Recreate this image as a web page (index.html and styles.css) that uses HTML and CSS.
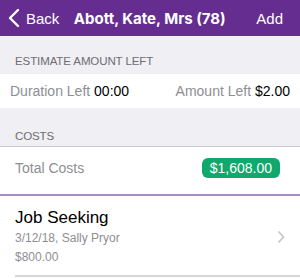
FILE: index.html
```html
<!DOCTYPE html>
<html lang="en">
<head>
    <meta charset="UTF-8">
    <meta name="viewport" content="width=device-width, initial-scale=1.0">
    <title>Abott, Kate, Mrs (78)</title>
    <link rel="stylesheet" href="styles.css">
</head>
<body>
    <div class="nav">
        <a class="nav-back">
            <svg class="back-icon" width="12" height="20" viewBox="0 0 12 20">
                <path d="M10 2 L2 10 L10 18" fill="none" stroke="#fff" stroke-width="2.4" stroke-linecap="round" stroke-linejoin="round"/>
            </svg>
            Back
        </a>
        <div class="nav-title">Abott, Kate, Mrs (78)</div>
        <a class="nav-add">Add</a>
    </div>

    <div class="section-head">Estimate Amount Left</div>
    <div class="row estimate">
        <span><span class="label">Duration Left</span> 00:00</span>
        <span><span class="label">Amount Left</span> $2.00</span>
    </div>

    <div class="section-head costs-head">Costs</div>
    <div class="row total">
        <span class="label">Total Costs</span>
        <span class="badge">$1,608.00</span>
    </div>

    <div class="list">
        <div class="item">
            <div class="item-text">
                <div class="item-title">Job Seeking</div>
                <div class="item-sub">3/12/18, Sally Pryor</div>
                <div class="item-sub">$800.00</div>
            </div>
            <svg class="chevron" width="8" height="14" viewBox="0 0 8 14">
                <path d="M1.5 1.5 L6.5 7 L1.5 12.5" fill="none" stroke="#c4c4c9" stroke-width="1.6"/>
            </svg>
        </div>
    </div>
</body>
</html>
```

FILE: styles.css
```css
body {
    margin: 0;
    font-family: "Liberation Sans", Arial, sans-serif;
    background-color: #fff;
    color: #000;
}
.nav {
    height: 36px;
    background-color: #652d8f;
    color: #fff;
    display: flex;
    align-items: center;
    padding: 0 17px 0 8px;
    font-size: 15px;
}
.nav-back {
    display: flex;
    align-items: center;
    gap: 6px;
}
.nav-title {
    flex: 1;
    text-align: center;
    font-family: Inter, "Liberation Sans", sans-serif;
    font-weight: bold;
    font-size: 15px;
    padding-right: 16px;
}
.section-head {
    background-color: #efeff4;
    color: #6d6d72;
    font-size: 11.5px;
    letter-spacing: -0.1px;
    text-transform: uppercase;
    height: 38px;
    box-sizing: border-box;
    padding: 19px 15px 0;
}
.costs-head {
    height: 39px;
    padding-top: 22px;
    border-bottom: 1px solid #c8c7cc;
}
.row {
    display: flex;
    justify-content: space-between;
    align-items: center;
}
.estimate {
    height: 34px;
    padding: 0 10px;
    font-size: 14px;
}
.label {
    color: #8e8e93;
}
.total {
    height: 47px;
    box-sizing: border-box;
    padding: 0 20px 6px 15px;
    font-size: 14px;
}
.badge {
    background-color: #10a86c;
    color: #fff;
    border-radius: 6px;
    padding: 2px 8px;
    line-height: 16px;
}
.list {
    border-top: 2px solid #a88bc5;
}
.item {
    display: flex;
    align-items: center;
    margin-left: 15px;
    padding: 11px 15px 8px 0;
    border-bottom: 2px solid #d6d6da;
}
.item-text {
    flex: 1;
}
.item-title {
    font-size: 17px;
    line-height: 22px;
}
.item-sub {
    font-size: 12px;
    color: #8e8e93;
    line-height: 19px;
}
```
